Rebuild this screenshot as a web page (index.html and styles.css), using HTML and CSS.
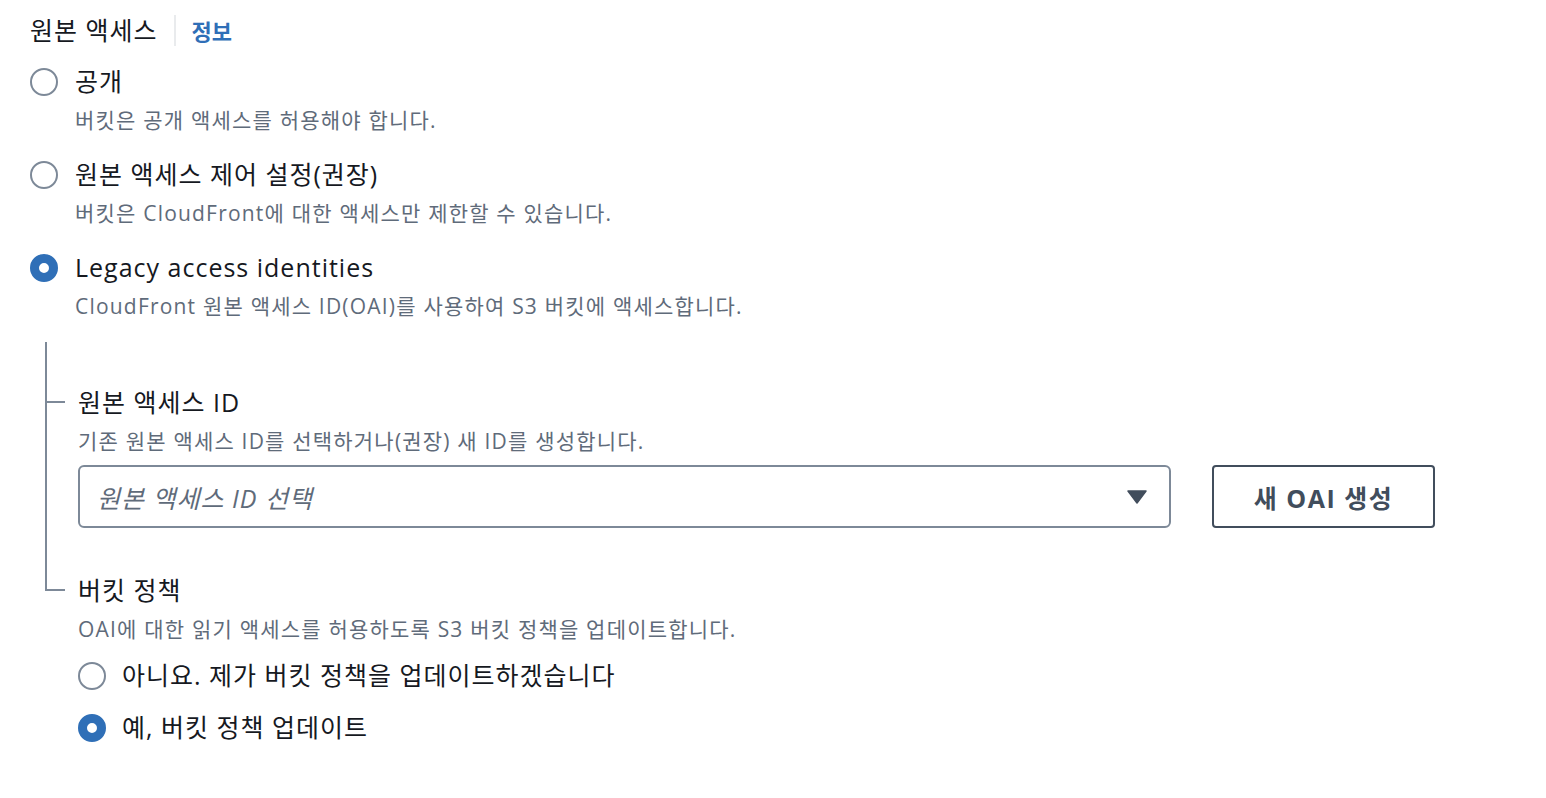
FILE: index.html
```html
<!DOCTYPE html>
<html>
<head>
    <title>원본 액세스</title>
    <link rel="stylesheet" href="styles.css">
</head>
<body>
    <div class="container">
        <div class="header">
            <h2>원본 액세스</h2>
            <span class="divider"></span>
            <a class="info" href="#">정보</a>
        </div>

        <div class="options">
            <label class="option">
                <span class="radio"></span>
                <span class="option-text">
                    <span class="option-label">공개</span>
                    <span class="option-desc">버킷은 공개 액세스를 허용해야 합니다.</span>
                </span>
            </label>

            <label class="option">
                <span class="radio"></span>
                <span class="option-text">
                    <span class="option-label">원본 액세스 제어 설정(권장)</span>
                    <span class="option-desc">버킷은 CloudFront에 대한 액세스만 제한할 수 있습니다.</span>
                </span>
            </label>

            <label class="option">
                <span class="radio checked"></span>
                <span class="option-text">
                    <span class="option-label">Legacy access identities</span>
                    <span class="option-desc">CloudFront 원본 액세스 ID(OAI)를 사용하여 S3 버킷에 액세스합니다.</span>
                </span>
            </label>
        </div>

        <div class="tree">
            <div class="tree-item">
                <div class="field-label">원본 액세스 ID</div>
                <div class="field-desc">기존 원본 액세스 ID를 선택하거나(권장) 새 ID를 생성합니다.</div>
                <div class="select-row">
                    <div class="select">
                        <span class="placeholder">원본 액세스 ID 선택</span>
                        <svg class="caret" width="20" height="14" viewBox="0 0 20 14">
                            <path d="M1 1 L19 1 L10 13 Z" fill="#414d5c" stroke="#414d5c" stroke-width="1.5" stroke-linejoin="round"/>
                        </svg>
                    </div>
                    <button type="button">새 OAI 생성</button>
                </div>
            </div>

            <div class="tree-item">
                <div class="field-label">버킷 정책</div>
                <div class="field-desc">OAI에 대한 읽기 액세스를 허용하도록 S3 버킷 정책을 업데이트합니다.</div>
                <label class="sub-option">
                    <span class="radio"></span>
                    <span class="option-label">아니요. 제가 버킷 정책을 업데이트하겠습니다</span>
                </label>
                <label class="sub-option">
                    <span class="radio checked"></span>
                    <span class="option-label">예, 버킷 정책 업데이트</span>
                </label>
            </div>
        </div>
    </div>
</body>
</html>
```

FILE: styles.css
```css
body {
    margin: 0;
    font-family: "Open Sans", "Noto Sans CJK KR", sans-serif;
    color: #16191f;
    background: #fff;
}

.container {
    padding: 12px 30px 0 30px;
}

.header {
    display: flex;
    align-items: center;
    height: 36px;
}

.header h2 {
    margin: 0;
    font-size: 25px;
    letter-spacing: 1px;
    font-weight: normal;
    line-height: 36px;
}

.divider {
    width: 2px;
    height: 31px;
    background: #e9ebed;
    margin: 0 16px 0 16px;
}

.info {
    font-size: 22px;
    font-weight: bold;
    color: #2f6fb7;
    text-decoration: none;
}

.options {
    margin-top: 15px;
}

.option {
    display: flex;
    margin-bottom: 20px;
}

.radio {
    box-sizing: border-box;
    flex: none;
    width: 28px;
    height: 28px;
    border: 2px solid #7d8998;
    border-radius: 50%;
    background: #fff;
    margin-top: 5px;
}

.radio.checked {
    border: 9px solid #2f6fb7;
}

.option .radio {
    margin-right: 17px;
}

.option-text {
    display: flex;
    flex-direction: column;
}

.option-label {
    font-size: 25px;
    letter-spacing: 1px;
    line-height: 36px;
}

.option-desc {
    font-size: 21px;
    letter-spacing: 1.2px;
    line-height: 32px;
    margin-top: 5px;
    color: #5f6b7a;
}

.tree {
    position: relative;
    margin-left: 15px;
    margin-top: 1px;
    padding-top: 42px;
}

.tree::before {
    content: "";
    position: absolute;
    left: 0;
    top: 0;
    width: 2px;
    height: 249px;
    background: #7d8998;
}

.tree-item {
    padding-left: 33px;
}

.field-label {
    position: relative;
    font-size: 25px;
    letter-spacing: 1px;
    line-height: 36px;
}

.field-label::before {
    content: "";
    position: absolute;
    left: -33px;
    top: 17px;
    width: 20px;
    height: 2px;
    background: #7d8998;
}

.field-desc {
    font-size: 21px;
    letter-spacing: 1.2px;
    line-height: 32px;
    margin-top: 5px;
    color: #5f6b7a;
}

.select-row {
    display: flex;
    gap: 41px;
    width: 1357px;
    margin-top: 8px;
    margin-bottom: 44px;
}

.select {
    box-sizing: border-box;
    flex: 1;
    height: 63px;
    border: 2px solid #7d8998;
    border-radius: 6px;
    display: flex;
    align-items: center;
    justify-content: space-between;
    padding: 0 22px 0 17px;
}

.placeholder {
    font-size: 25px;
    letter-spacing: 1px;
    font-style: italic;
    color: #5f6b7a;
}

.caret {
    display: block;
}

button {
    box-sizing: border-box;
    width: 223px;
    height: 63px;
    border: 2px solid #414d5c;
    border-radius: 4px;
    background: #fff;
    color: #414d5c;
    font-family: "Open Sans", "Noto Sans CJK KR", sans-serif;
    font-size: 25px;
    letter-spacing: 1.5px;
    font-weight: bold;
    cursor: pointer;
}

.sub-option {
    display: flex;
    margin-top: 12px;
}

.sub-option + .sub-option {
    margin-top: 16px;
}

.sub-option .radio {
    margin-right: 16px;
}
```
